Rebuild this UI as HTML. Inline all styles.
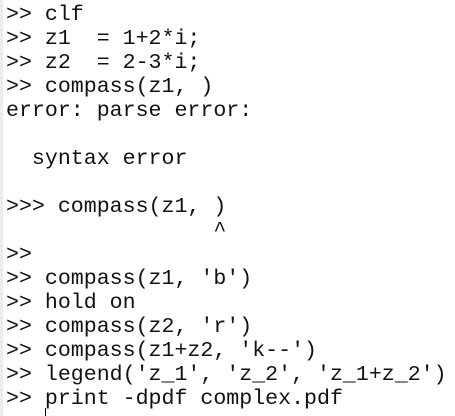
<!DOCTYPE html>
<html><head><style>
html,body{margin:0;padding:0;background:#fff;width:455px;height:416px;overflow:hidden}
.strip{position:absolute;left:0;top:0;width:3px;height:416px;background:#ececec}
pre{position:absolute;left:6px;top:3px;margin:0;font-family:"Liberation Mono","Courier New",monospace;font-size:21.6px;line-height:24px;color:#111}
.cur{position:absolute;left:45px;top:408px;width:1px;height:8px;background:#000}
</style></head><body>
<div class="strip"></div>
<pre>&gt;&gt; clf
&gt;&gt; z1  = 1+2*i;
&gt;&gt; z2  = 2-3*i;
&gt;&gt; compass(z1, )
error: parse error:

  syntax error

&gt;&gt;&gt; compass(z1, )
                ^
&gt;&gt;
&gt;&gt; compass(z1, 'b')
&gt;&gt; hold on
&gt;&gt; compass(z2, 'r')
&gt;&gt; compass(z1+z2, 'k--')
&gt;&gt; legend('z_1', 'z_2', 'z_1+z_2')
&gt;&gt; print -dpdf complex.pdf</pre>
<div class="cur"></div>
</body></html>
